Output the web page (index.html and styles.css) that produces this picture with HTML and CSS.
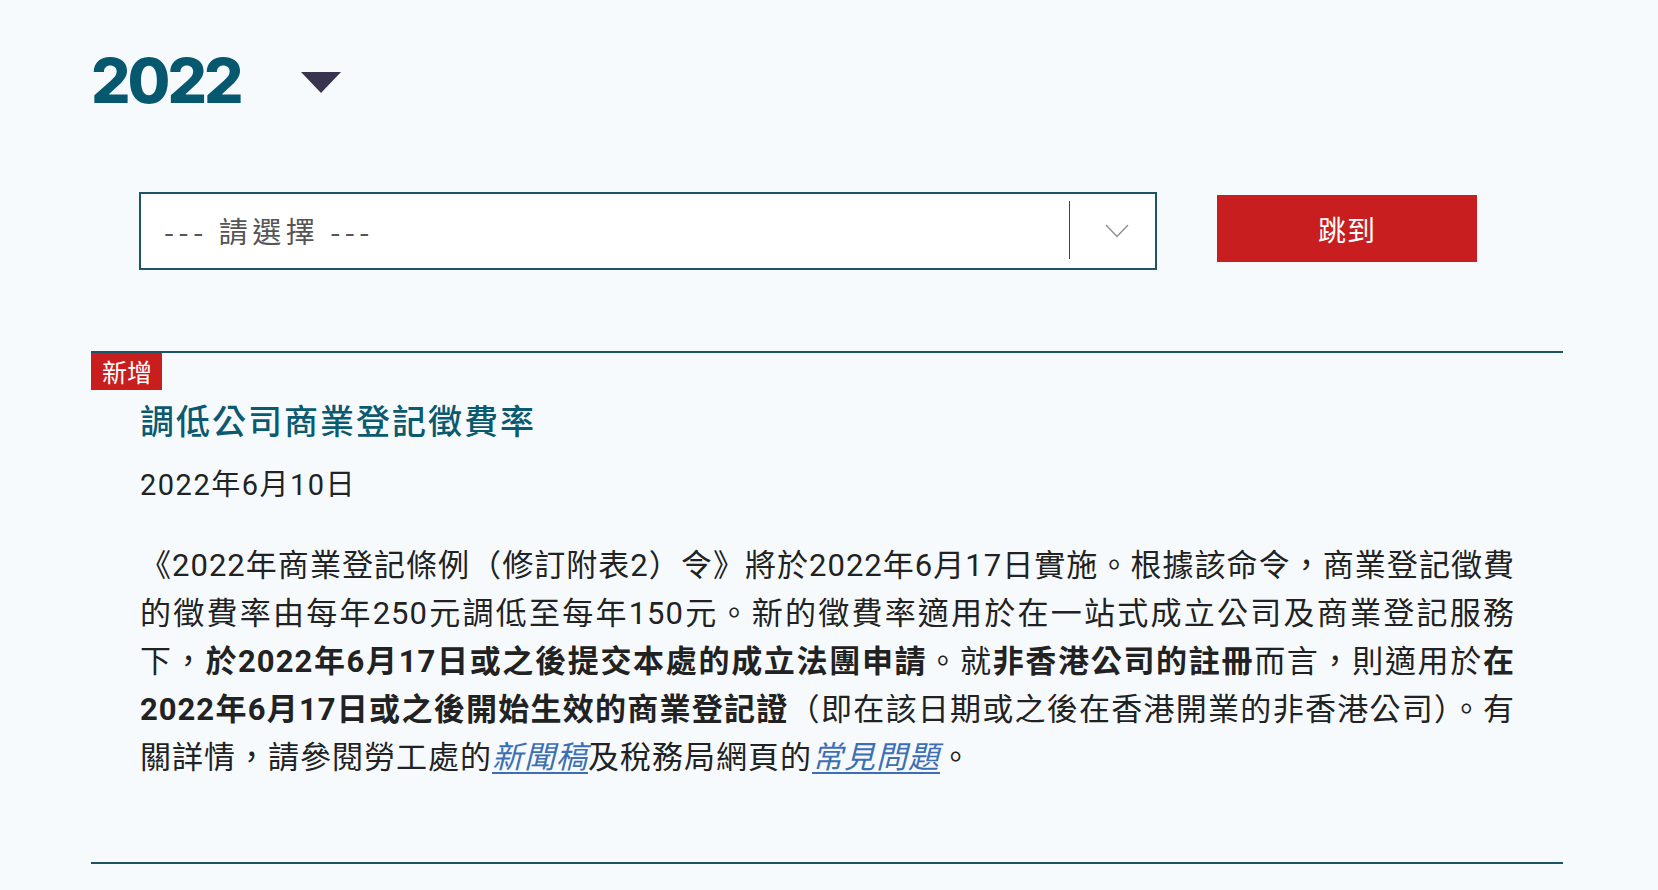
FILE: index.html
```html
<!DOCTYPE html>
<html lang="zh-TW">
<head>
<meta charset="utf-8">
<title>2022</title>
<link rel="stylesheet" href="styles.css">
</head>
<body>
<main class="page">
  <div class="year-head">
    <h2 class="year">2022</h2>
    <span class="year-caret"></span>
  </div>

  <form class="jump">
    <div class="select">
      <span class="select-value">--- 請選擇 ---</span>
      <span class="select-sep"></span>
      <span class="select-arrow">
        <svg width="24" height="14" viewBox="0 0 24 14"><polyline points="1,1 12,12.5 23,1" fill="none" stroke="#8b9098" stroke-width="1.4"/></svg>
      </span>
    </div>
    <button type="button" class="jump-btn">跳到</button>
  </form>

  <article class="item">
    <span class="badge">新增</span>
    <div class="item-body">
      <h3 class="title">調低公司商業登記徵費率</h3>
      <p class="date">2022年6月10日</p>
      <p class="text">《2022年商業登記條例（修訂附表2）令》將於2022年6月17日實施。根據該命令，商業登記徵費的徵費率由每年250元調低至每年150元。新的徵費率適用於在一站式成立公司及商業登記服務下，<b>於2022年6月17日或之後提交本處的成立法團申請</b>。就<b>非香港公司的註冊</b>而言，則適用於<b>在2022年6月17日或之後開始生效的商業登記證</b>（即在該日期或之後在香港開業的非香港公司）。有關詳情，請參閱勞工處的<a href="#">新聞稿</a>及稅務局網頁的<a href="#">常見問題</a>。</p>
    </div>
  </article>
</main>
</body>
</html>
```

FILE: styles.css
```css
body {
  margin: 0;
  background: #f6fafd;
  color: #222;
  font-family: Roboto, "Noto Sans CJK TC", sans-serif;
}

.page {
  padding: 50px 95px 0 91px;
}

.year-head {
  display: flex;
  align-items: center;
}

.year {
  margin: 0;
  font-family: Inter, sans-serif;
  font-weight: 800;
  font-size: 62px;
  line-height: 62px;
  letter-spacing: -3px;
  color: #06586f;
}

.year-caret {
  margin-left: 60px;
  margin-top: 2px;
  width: 0;
  height: 0;
  border-left: 20.5px solid transparent;
  border-right: 20.5px solid transparent;
  border-top: 21px solid #38344f;
}

.jump {
  display: flex;
  align-items: flex-start;
  margin: 80px 0 0;
  padding-left: 48px;
}

.select {
  box-sizing: border-box;
  width: 1018px;
  height: 78px;
  border: 2px solid #1b5567;
  background: #fff;
  display: flex;
  align-items: center;
}

.select-value {
  flex: 1;
  padding: 0 0 3px 23px;
  font-family: "Noto Sans CJK TC", sans-serif;
  font-size: 29px;
  letter-spacing: 4.5px;
  color: #555;
}

.select-sep {
  align-self: stretch;
  width: 1px;
  margin: 7px 0 9px;
  background: #44444f;
}

.select-arrow {
  box-sizing: border-box;
  width: 85px;
  padding-left: 35px;
  display: flex;
  align-items: center;
}

.jump-btn {
  margin: 3px 0 0 60px;
  width: 260px;
  height: 67px;
  border: 0;
  background: #c91e20;
  color: #fff;
  font-family: "Noto Sans CJK TC", sans-serif;
  font-size: 28px;
  letter-spacing: 1px;
  cursor: pointer;
}

.item {
  margin-top: 81px;
  border-top: 2px solid #1d5465;
  border-bottom: 2px solid #1d5465;
  padding-bottom: 80px;
}

.badge {
  display: inline-block;
  vertical-align: top;
  background: #c81e1e;
  color: #fff;
  font-family: "Noto Sans CJK TC", sans-serif;
  font-size: 25px;
  line-height: 37px;
  padding: 0 10px 0 11px;
}

.item-body {
  padding: 0 48px 0 49px;
}

.title {
  margin: 6px 0 0;
  font-family: "Noto Sans CJK TC", sans-serif;
  font-weight: 500;
  font-size: 34px;
  line-height: 48px;
  letter-spacing: 2px;
  color: #0b5a6f;
}

.date {
  margin: 19px 0 0;
  font-size: 29px;
  line-height: 44px;
  letter-spacing: 1.5px;
}

.text {
  margin: 35px 0 0;
  font-size: 31px;
  line-height: 48px;
  letter-spacing: 1px;
  text-align: justify;
}

.text b {
  font-weight: 700;
}

.text a {
  color: #3d6fb4;
  font-style: italic;
  text-decoration-thickness: 2px;
  text-underline-offset: 4px;
}
```
